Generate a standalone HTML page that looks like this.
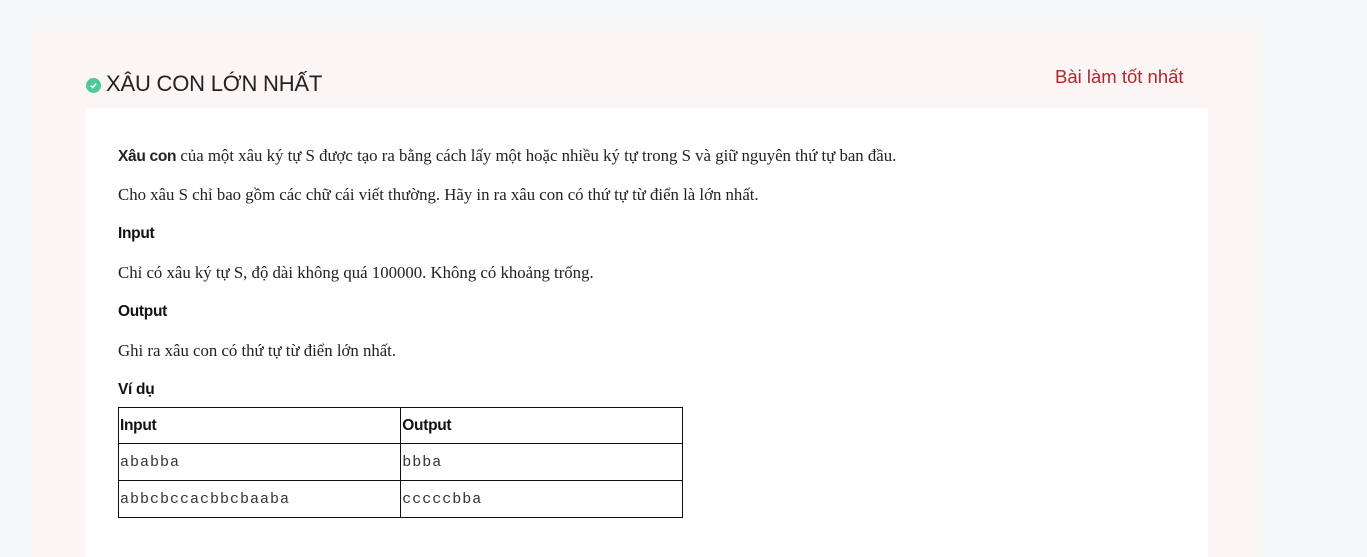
<!DOCTYPE html>
<html><head><meta charset="utf-8"><style>
html,body{margin:0;width:1367px;height:557px;overflow:hidden}
body{background:#f5f6f8;font-family:"Liberation Sans",sans-serif;position:relative}
.card{position:absolute;left:32px;top:30px;width:1230px;height:540px;background:#fbf6f5}
.title{position:absolute;left:86px;top:71px;font-size:22px;color:#222;display:flex;align-items:center;letter-spacing:-0.2px}
.chk{width:15px;height:15px;border-radius:50%;background:#4fc89a;margin-right:5px;display:inline-flex;align-items:center;justify-content:center;margin-top:2px}
.best{position:absolute;left:1055px;top:66px;font-size:18.5px;color:#b3262c}
.inner{position:absolute;left:86px;top:108px;width:1122px;height:460px;background:#fff}
p{position:absolute;left:118px;margin:0;font-family:"Liberation Serif",serif;font-size:16.8px;color:#222}
h4{position:absolute;left:118px;margin:0;font-size:15.5px;font-weight:bold;color:#111;letter-spacing:-0.3px}
table{position:absolute;left:118px;top:407px;border-collapse:collapse;width:565px}
td{border:1px solid #111;height:36px;padding:0 1px;font-family:"Liberation Mono",monospace;font-size:15px;letter-spacing:1px;color:#333;width:280px}
th{border:1px solid #111;height:35px;padding:0 1px;text-align:left;font-size:15.5px;font-weight:bold;color:#111;letter-spacing:-0.3px}
</style></head><body>
<div class="card"></div>
<div class="title"><span class="chk"><svg width="9" height="9" viewBox="0 0 10 10"><path d="M2 5.2l2 2 4-4.2" stroke="#fff" stroke-width="1.8" fill="none"/></svg></span>XÂU CON LỚN NHẤT</div>
<div class="best">Bài làm tốt nhất</div>
<div class="inner"></div>
<p style="top:146px"><b style="font-family:'Liberation Sans',sans-serif;font-size:15.5px;letter-spacing:-0.3px">Xâu con</b> của một xâu ký tự S được tạo ra bằng cách lấy một hoặc nhiều ký tự trong S và giữ nguyên thứ tự ban đầu.</p>
<p style="top:185px">Cho xâu S chỉ bao gồm các chữ cái viết thường. Hãy in ra xâu con có thứ tự từ điển là lớn nhất.</p>
<h4 style="top:225px">Input</h4>
<p style="top:263px">Chỉ có xâu ký tự S, độ dài không quá 100000. Không có khoảng trống.</p>
<h4 style="top:303px">Output</h4>
<p style="top:341px">Ghi ra xâu con có thứ tự từ điển lớn nhất.</p>
<h4 style="top:381px">Ví dụ</h4>
<table><tr><th>Input</th><th>Output</th></tr>
<tr><td>ababba</td><td>bbba</td></tr>
<tr><td>abbcbccacbbcbaaba</td><td>cccccbba</td></tr></table>
</body></html>
